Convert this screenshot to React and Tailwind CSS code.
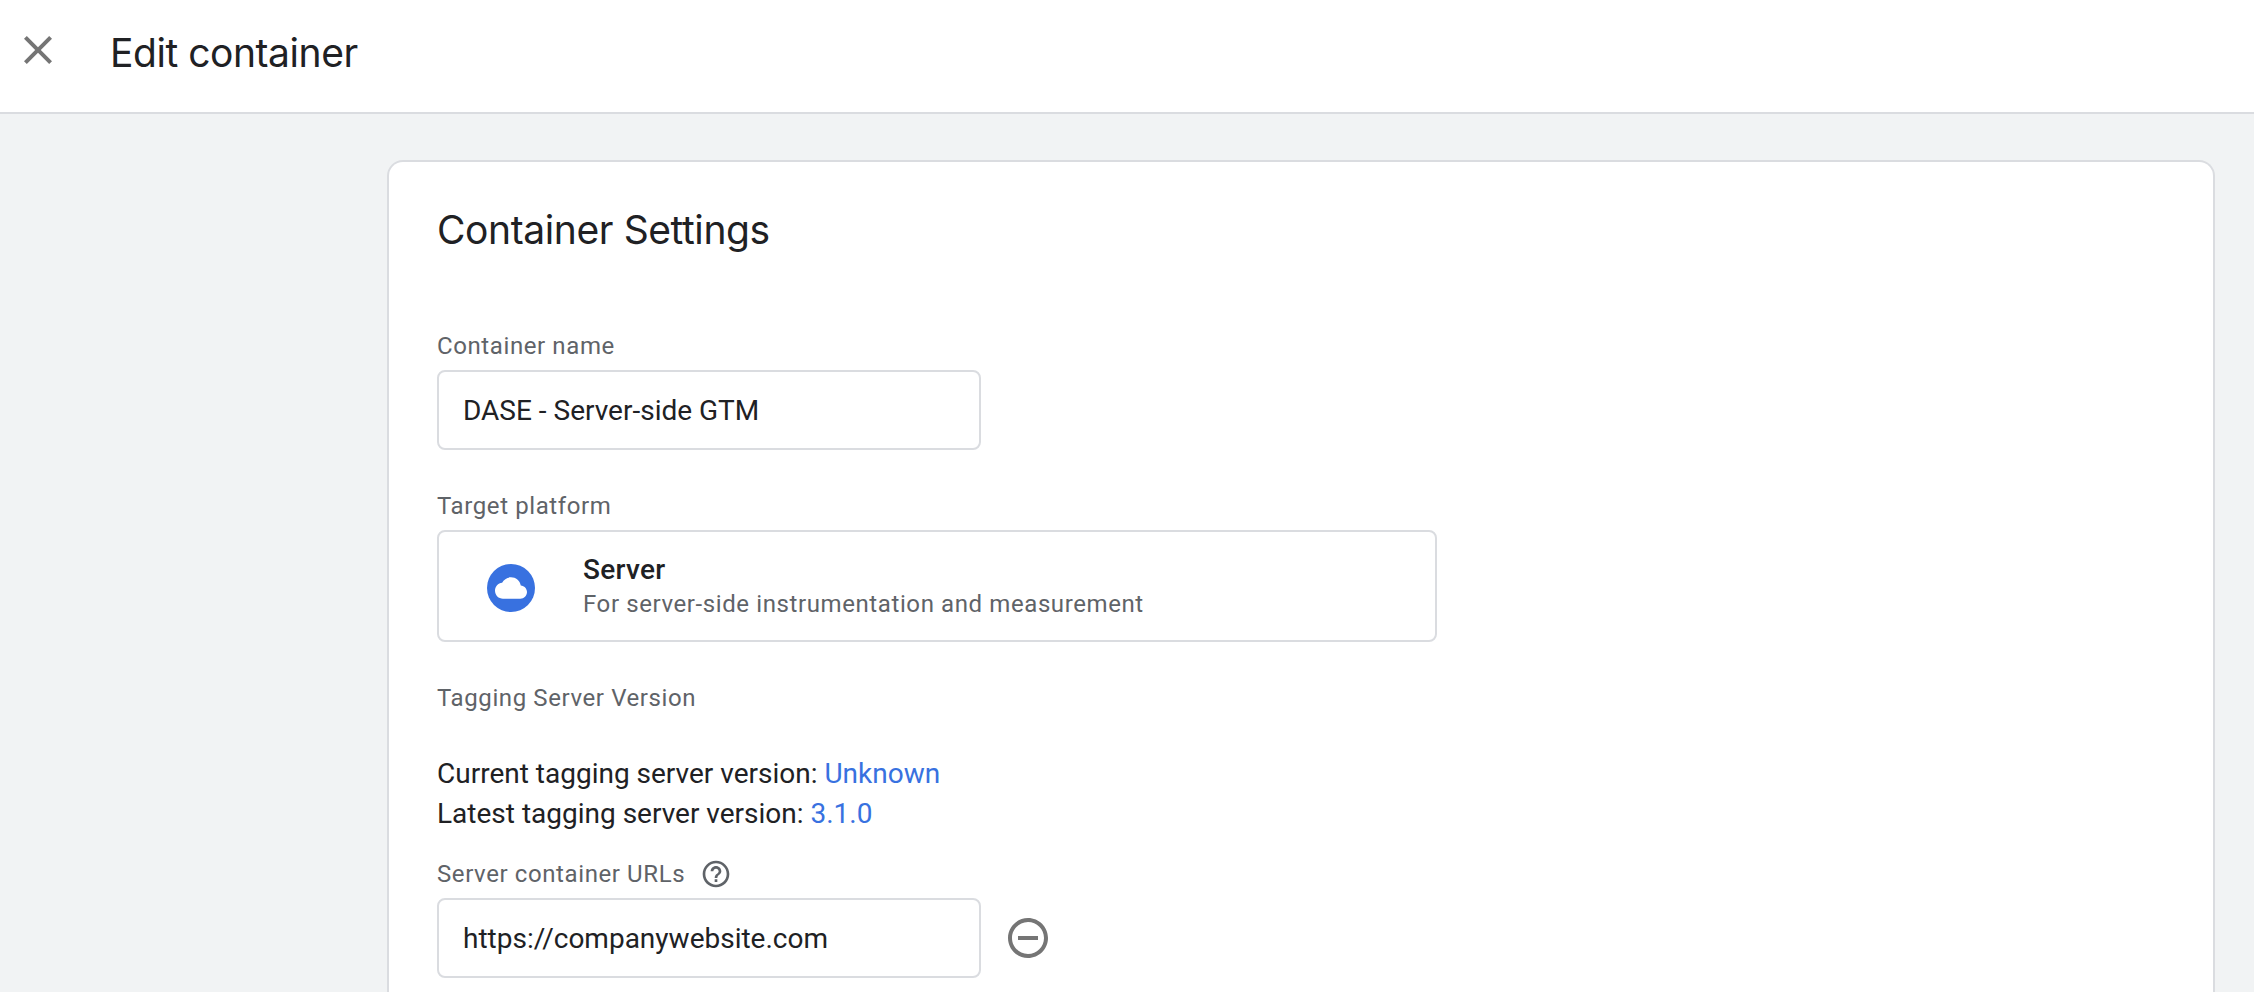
import React from "react";

function CloseIcon() {
  return (
    <svg className="size-12 shrink-0" viewBox="0 0 24 24" fill="#757575" aria-hidden="true">
      <path d="M19 6.41L17.59 5 12 10.59 6.41 5 5 6.41 10.59 12 5 17.59 6.41 19 12 13.41 17.59 19 19 17.59 13.41 12z" />
    </svg>
  );
}

function CloudIcon() {
  return (
    <svg className="size-12 shrink-0" viewBox="0 0 48 48" aria-hidden="true">
      <circle cx="24" cy="24" r="24" fill="#3871e0" />
      <path
        fill="#fff"
        transform="translate(8 8) scale(1.3333)"
        d="M19.35 10.04C18.67 6.59 15.64 4 12 4 9.11 4 6.6 5.64 5.35 8.04 2.34 8.36 0 10.91 0 14c0 3.31 2.69 6 6 6h13c2.76 0 5-2.24 5-5 0-2.64-2.05-4.78-4.65-4.96z"
      />
    </svg>
  );
}

function HelpIcon() {
  return (
    <svg className="size-8 shrink-0" viewBox="0 0 24 24" fill="#5f6368" aria-hidden="true">
      <path d="M11 18h2v-2h-2v2zm1-16C6.48 2 2 6.48 2 12s4.48 10 10 10 10-4.48 10-10S17.52 2 12 2zm0 18c-4.41 0-8-3.59-8-8s3.59-8 8-8 8 3.59 8 8-3.59 8-8 8zm0-14c-2.21 0-4 1.79-4 4h2c0-1.1.9-2 2-2s2 .9 2 2c0 2-3 1.75-3 5h2c0-2.25 3-2.5 3-5 0-2.21-1.79-4-4-4z" />
    </svg>
  );
}

function RemoveIcon() {
  return (
    <svg className="size-12 shrink-0" viewBox="0 0 24 24" fill="#757575" aria-hidden="true">
      <path d="M7 11v2h10v-2H7zm5-9C6.48 2 2 6.48 2 12s4.48 10 10 10 10-4.48 10-10S17.52 2 12 2zm0 18c-4.41 0-8-3.59-8-8s3.59-8 8-8 8 3.59 8 8-3.59 8-8 8z" />
    </svg>
  );
}

function Label({ children }) {
  return (
    <div className="h-8 text-[24px] leading-8 tracking-[0.6px] text-[#5f6368] whitespace-nowrap">
      {children}
    </div>
  );
}

function TextField({ value }) {
  return (
    <div className="flex h-20 w-[544px] items-center rounded-lg border-2 border-[#dadce0] bg-white px-6 pt-0.5 text-[28px] leading-10">
      {value}
    </div>
  );
}

export default function App() {
  return (
    <div className="flex h-[992px] w-full flex-col overflow-hidden bg-[#f1f3f4] font-['Roboto',sans-serif] text-[#202124]">
      <header className="flex h-[114px] shrink-0 items-start border-b-2 border-[#dadce0] bg-white pl-[14px]">
        <button className="mt-[26px]" aria-label="Close">
          <CloseIcon />
        </button>
        <h1 className="mt-[29px] ml-12 font-['Inter',sans-serif] text-[39px] leading-12 tracking-[-0.45px]">
          Edit container
        </h1>
      </header>

      <main className="mt-[46px] mr-[39px] ml-[387px] flex-1 rounded-t-2xl border-2 border-b-0 border-[#dadce0] bg-white pt-11 pl-12">
        <h2 className="font-['Inter',sans-serif] text-[39px] leading-12 tracking-[-0.4px]">
          Container Settings
        </h2>

        <div className="mt-[76px]">
          <Label>Container name</Label>
          <div className="mt-2">
            <TextField value="DASE - Server-side GTM" />
          </div>
        </div>

        <div className="mt-10">
          <Label>Target platform</Label>
          <div className="mt-2 flex h-28 w-[1000px] items-start rounded-lg border-2 border-[#dadce0] pl-12">
            <div className="mt-8">
              <CloudIcon />
            </div>
            <div className="mt-[18px] ml-12">
              <div className="text-[28px] leading-10 font-medium tracking-[0.3px]">Server</div>
              <div className="-mt-0.5 text-[24px] leading-8 tracking-[0.6px] text-[#5f6368]">
                For server-side instrumentation and measurement
              </div>
            </div>
          </div>
        </div>

        <div className="mt-10">
          <Label>Tagging Server Version</Label>
          <div className="mt-10 text-[28px] leading-10">
            <p>
              Current tagging server version: <a className="text-[#3871e0]">Unknown</a>
            </p>
            <p>
              Latest tagging server version: <a className="text-[#3871e0]">3.1.0</a>
            </p>
          </div>
        </div>

        <div className="mt-6">
          <div className="flex items-center gap-[15px]">
            <Label>Server container URLs</Label>
            <HelpIcon />
          </div>
          <div className="mt-2 flex items-center gap-[23px]">
            <TextField value="https://companywebsite.com" />
            <button aria-label="Remove URL">
              <RemoveIcon />
            </button>
          </div>
        </div>
      </main>
    </div>
  );
}
